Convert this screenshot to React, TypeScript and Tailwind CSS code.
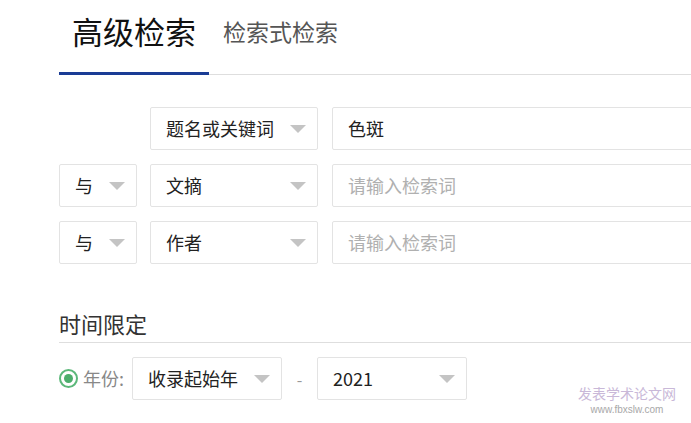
import React from 'react';

const font = { fontFamily: '"Microsoft YaHei", "Noto Sans CJK SC", "Noto Sans", sans-serif' };

function Caret() {
  return (
    <svg width="16" height="8" viewBox="0 0 16 8" className="shrink-0">
      <path d="M0 0 L16 0 L8 8 Z" fill="#c4c4c4" />
    </svg>
  );
}

function Select({ label, className }: { label: string; className: string }) {
  return (
    <div
      className={`h-[43px] flex items-center justify-between pl-[15px] pr-[11px] bg-white border border-[#e3e3e3] rounded-[2px] text-[18px] text-[#222] ${className}`}
    >
      <span>{label}</span>
      <Caret />
    </div>
  );
}

function Field({ value, placeholder }: { value?: string; placeholder?: string }) {
  return (
    <div className="h-[43px] w-[400px] shrink-0 flex items-center pl-[15px] bg-white border border-[#e3e3e3] rounded-[2px] text-[18px]">
      {value ? <span className="text-[#222]">{value}</span> : <span className="text-[#b0b0b0]">{placeholder}</span>}
    </div>
  );
}

export default function App() {
  const rows = [
    { logic: null, field: '题名或关键词', value: '色斑' },
    { logic: '与', field: '文摘', value: '' },
    { logic: '与', field: '作者', value: '' },
  ];

  return (
    <div className="relative w-[691px] h-[423px] overflow-hidden bg-white" style={font}>
      <div className="pl-[59px]">
        {/* tabs */}
        <div className="flex h-[75px] border-b border-[#dedede]">
          <div className="w-[150px] h-[75px] border-b-[3px] border-[#1a3c95] flex justify-center pt-[11px]">
            <span className="text-[31px] leading-[40px] text-[#111]">高级检索</span>
          </div>
          <div className="pl-[14px] pt-[15px]">
            <span className="text-[23px] leading-[32px] text-[#555]">检索式检索</span>
          </div>
        </div>

        {/* search rows */}
        <div className="flex flex-col gap-[14px] pt-[32px]">
          {rows.map((r, i) => (
            <div key={i} className="flex items-center">
              {r.logic ? (
                <Select label={r.logic} className="w-[78px] shrink-0" />
              ) : (
                <div className="w-[78px] shrink-0" />
              )}
              <Select label={r.field} className="w-[168px] ml-[13px] shrink-0" />
              <div className="ml-[14px]">
                <Field value={r.value} placeholder="请输入检索词" />
              </div>
            </div>
          ))}
        </div>

        {/* time limit */}
        <div className="mt-[41px] border-b border-[#dedede] h-[38px] pt-[2px]">
          <span className="text-[22px] leading-[32px] text-[#333]">时间限定</span>
        </div>
        <div className="flex items-center mt-[14px]">
          <div className="w-[19px] h-[19px] rounded-full border-2 border-[#5cb87a] flex items-center justify-center">
            <div className="w-[9px] h-[9px] rounded-full bg-[#4cae6c]" />
          </div>
          <span className="ml-[5px] text-[18px] text-[#888] w-[49px]">年份:</span>
          <Select label="收录起始年" className="w-[150px] shrink-0" />
          <span className="w-[35px] text-center text-[#999] text-[16px]">-</span>
          <Select label="2021" className="w-[150px] shrink-0" />
        </div>
      </div>

      {/* watermark */}
      <div className="absolute left-[572px] top-[385px] w-[110px] flex flex-col items-center whitespace-nowrap">
        <span className="text-[14px] leading-[16px] text-[#c9b8d8]">发表学术论文网</span>
        <span className="text-[10px] leading-[11px] text-[#a8a8a8] mt-[3px]" style={{ fontFamily: '"Liberation Sans", sans-serif' }}>
          www.fbxslw.com
        </span>
      </div>
    </div>
  );
}
